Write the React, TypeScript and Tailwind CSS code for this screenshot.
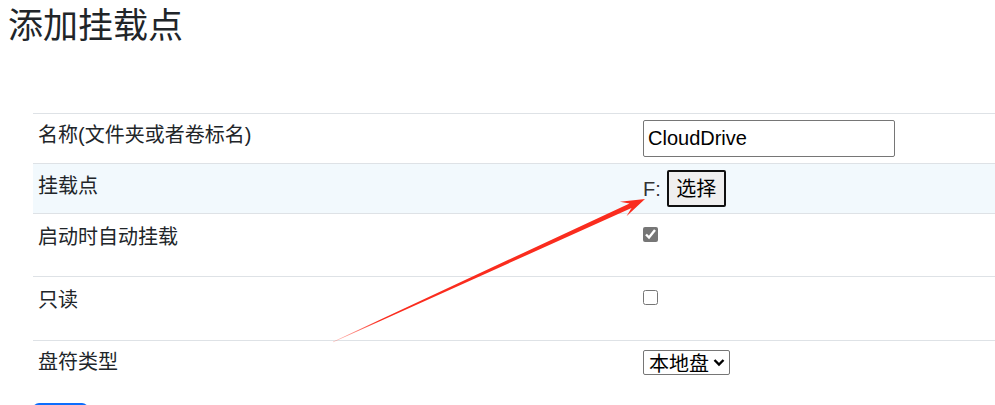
import { useState } from "react";

const font = {
  fontFamily: '"Liberation Sans", "Noto Sans CJK SC", sans-serif',
};

function Arrow() {
  // red annotation arrow pointing at the drive letter
  return (
    <svg
      className="pointer-events-none absolute left-0 top-0"
      width="995"
      height="405"
      viewBox="0 0 995 405"
    >
      <defs>
        <linearGradient id="fade" x1="333" y1="342" x2="645" y2="199" gradientUnits="userSpaceOnUse">
          <stop offset="0" stopColor="#ff4a3c" stopOpacity="0.35" />
          <stop offset="0.15" stopColor="#fa2c1e" stopOpacity="1" />
          <stop offset="1" stopColor="#fa2c1e" />
        </linearGradient>
      </defs>
      <polygon
        points="333.1,342.3 631.5,208 626.5,216.3 645,199 619.9,201.7 629.5,203.4 332.9,341.7"
        fill="url(#fade)"
      />
    </svg>
  );
}

export default function App() {
  const [name, setName] = useState("CloudDrive");
  const [autoMount, setAutoMount] = useState(true);
  const [readOnly, setReadOnly] = useState(false);
  const [driveType, setDriveType] = useState("local");

  return (
    <div className="relative min-h-screen bg-white text-[#212529]" style={font}>
      <h1
        className="pl-2 text-[35px] font-normal leading-[46px]"
        style={{ fontFamily: '"Noto Sans CJK SC", sans-serif' }}
      >
        添加挂载点
      </h1>

      <div className="ml-[33px] mt-[67px] text-[20px] leading-[30px]">
        <div className="grid h-[50px] grid-cols-[605px_1fr] border-t border-[#dee2e6]">
          <div className="pl-[5px] pt-[6px]">名称(文件夹或者卷标名)</div>
          <div className="pl-[5px] pt-[6px]">
            <input
              value={name}
              onChange={(e) => setName(e.target.value)}
              className="h-[37px] w-[252px] rounded-[2px] border border-[#767676] px-[4px] text-[20px] text-black outline-none"
            />
          </div>
        </div>

        <div className="grid h-[50px] grid-cols-[605px_1fr] border-t border-[#dee2e6] bg-[#f2f9fd]">
          <div className="pl-[5px] pt-[7px]">挂载点</div>
          <div className="flex items-center gap-[6px] self-start pl-[5px] pt-[6px]">
            <span className="text-[#333]">F:</span>
            <button className="h-[37px] w-[59px] rounded-[2px] border-2 border-[#101010] bg-[#efefef] text-[20px] text-black">
              选择
            </button>
          </div>
        </div>

        <div className="grid h-[63px] grid-cols-[605px_1fr] border-t border-[#dee2e6]">
          <div className="pl-[5px] pt-[8px]">启动时自动挂载</div>
          <div className="pl-[5px] pt-[13px]">
            <input
              type="checkbox"
              checked={autoMount}
              onChange={(e) => setAutoMount(e.target.checked)}
              className="m-0 block h-[15px] w-[15px] accent-[#767676]"
            />
          </div>
        </div>

        <div className="grid h-[64px] grid-cols-[605px_1fr] border-t border-[#dee2e6]">
          <div className="pl-[5px] pt-[8px]">只读</div>
          <div className="pl-[5px] pt-[13px]">
            <input
              type="checkbox"
              checked={readOnly}
              onChange={(e) => setReadOnly(e.target.checked)}
              className="m-0 block h-[15px] w-[15px] accent-[#767676]"
            />
          </div>
        </div>

        <div className="grid h-[50px] grid-cols-[605px_1fr] border-t border-[#dee2e6]">
          <div className="pl-[5px] pt-[6px]">盘符类型</div>
          <div className="pl-[5px] pt-[8px]">
            <label className="inline-flex h-[25px] w-[87px] items-center rounded-[2px] border border-[#767676] bg-white pr-[4px] text-black">
              <select
                value={driveType}
                onChange={(e) => setDriveType(e.target.value)}
                className="h-full flex-1 appearance-none bg-transparent pl-[5px] text-[20px] leading-[23px] outline-none"
                style={{ fontFamily: '"Noto Sans CJK SC", sans-serif' }}
              >
                <option value="local">本地盘</option>
                <option value="network">网络盘</option>
              </select>
              <svg width="12" height="9" viewBox="0 0 12 9">
                <path d="M1.5 2 6 6.5 10.5 2" fill="none" stroke="#000" strokeWidth="2.4" />
              </svg>
            </label>
          </div>
        </div>

        <button
          aria-label="确定"
          className="mt-[13px] h-[38px] w-[55px] rounded-[6px] bg-[#0d6efd]"
        />
      </div>

      <Arrow />
    </div>
  );
}
